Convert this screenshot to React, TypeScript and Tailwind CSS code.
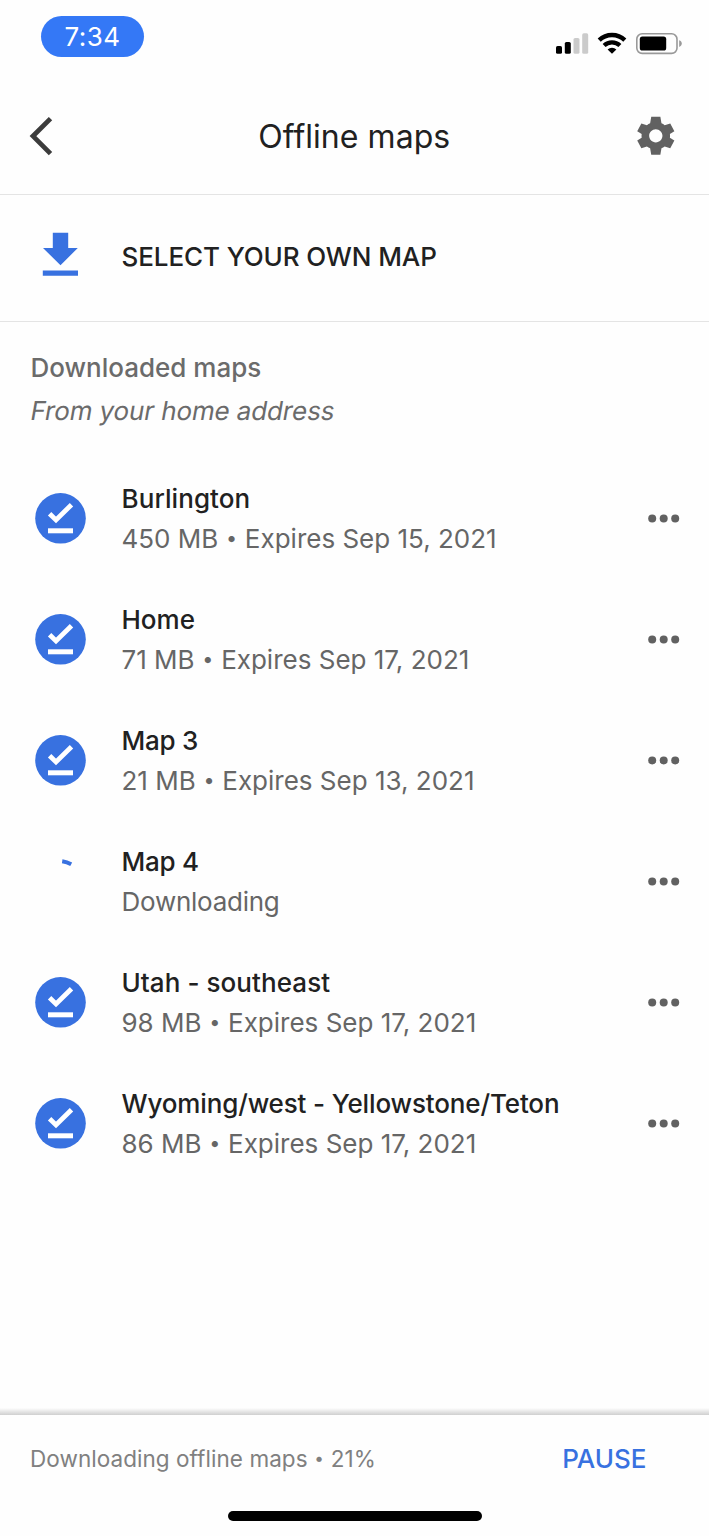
type OfflineMap = {
  name: string;
  size?: string;
  expires?: string;
  tracking: string;
};

const maps: OfflineMap[] = [
  { name: 'Burlington', size: '450 MB', expires: 'Sep 15, 2021', tracking: 'tracking-[0.08px]' },
  { name: 'Home', size: '71 MB', expires: 'Sep 17, 2021', tracking: 'tracking-normal' },
  { name: 'Map 3', size: '21 MB', expires: 'Sep 13, 2021', tracking: 'tracking-[-0.25px]' },
  { name: 'Map 4', tracking: 'tracking-[-0.25px]' },
  { name: 'Utah - southeast', size: '98 MB', expires: 'Sep 17, 2021', tracking: 'tracking-[0.07px]' },
  {
    name: 'Wyoming/west - Yellowstone/Teton',
    size: '86 MB',
    expires: 'Sep 17, 2021',
    tracking: 'tracking-[-0.14px]',
  },
];

function StatusIcons() {
  return (
    <svg className="h-6 w-[128px]" viewBox="555 32 128 24" fill="none">
      <rect x="556" y="46" width="6" height="7.8" rx="1.6" fill="#000" />
      <rect x="564.8" y="42" width="6" height="11.8" rx="1.6" fill="#000" />
      <rect x="573.5" y="38" width="6" height="15.8" rx="1.6" fill="#cbcbcb" />
      <rect x="582.2" y="33.3" width="6" height="20.5" rx="1.6" fill="#cbcbcb" />
      <path d="M599.2 40.2a18.4 18.4 0 0 1 25.6 0" stroke="#000" strokeWidth="4.4" />
      <path d="M604.1 45.6a11.4 11.4 0 0 1 15.8 0" stroke="#000" strokeWidth="4.2" />
      <path d="M612 53.8l-4.4-4.4a6.4 6.4 0 0 1 8.8 0z" fill="#000" />
      <rect x="636.8" y="33.8" width="40.2" height="19.6" rx="5.4" stroke="#999" strokeWidth="1.6" />
      <rect x="639.8" y="36.6" width="26.4" height="14" rx="2.6" fill="#000" />
      <path d="M679.2 40.2c1.7.6 2.6 1.8 2.6 3.4s-.9 2.8-2.6 3.4z" fill="#999" />
    </svg>
  );
}

function GearIcon() {
  return (
    <svg className="size-[45.6px]" viewBox="0 0 24 24" fill="#616161">
      <path d="M19.43 12.98c.04-.32.07-.64.07-.98s-.03-.66-.07-.98l2.35-1.45L19.6 5.5l-2.93.9c-.52-.4-1.08-.73-1.69-.98L14.4 2H9.6l-.58 3.42c-.61.25-1.17.58-1.69.98l-2.93-.9-2.18 4.07 2.35 1.45c-.04.32-.07.65-.07.98s.03.66.07.98l-2.35 1.45L4.4 18.5l2.93-.9c.52.4 1.08.73 1.69.98L9.6 22h4.8l.58-3.42c.61-.25 1.17-.58 1.69-.98l2.93.9 2.18-4.07zM12 15.5c-1.93 0-3.5-1.57-3.5-3.5s1.57-3.5 3.5-3.5 3.5 1.57 3.5 3.5-1.57 3.5-3.5 3.5z" />
    </svg>
  );
}

function DoneIcon() {
  return (
    <svg className="size-[52px]" viewBox="-25.5 -25.3 52 52" fill="none">
      <circle r="25.3" fill="#3871e0" />
      <path d="M-10.9-4.6l6.4 6.2L11-13.6" stroke="#fff" strokeWidth="4.8" />
      <path d="M-12.5 12.5h25" stroke="#fff" strokeWidth="5" />
    </svg>
  );
}

function SpinnerIcon() {
  return (
    <svg className="size-[52px]" viewBox="-25.5 -25.3 52 52" fill="none">
      <path d="M1.7-20A26 26 0 0 1 10.7-17" stroke="#3871e0" strokeWidth="4" />
    </svg>
  );
}

function Bullet() {
  return <span className="px-[0.02em] align-[0.14em] text-[0.76em] leading-none">•</span>;
}

function MapRow({ map }: { map: OfflineMap }) {
  return (
    <li className="flex h-[121px] items-center pr-[29px] pl-[34.5px]">
      {map.size ? <DoneIcon /> : <SpinnerIcon />}
      <div className="ml-[35px] flex-1 text-[26px] leading-[40px] whitespace-nowrap">
        <p className="font-medium text-[#212121]">
          <span className={map.tracking}>{map.name}</span>
        </p>
        {map.size ? (
          <p className="text-[#666]">
            {map.size} <Bullet /> Expires {map.expires}
          </p>
        ) : (
          <p className="tracking-[-0.25px] text-[#666]">Downloading</p>
        )}
      </div>
      <button type="button" aria-label="More">
        <svg className="h-2.5 w-8" viewBox="0 0 32 10" fill="#616161">
          <circle cx="4.2" cy="4.4" r="4" />
          <circle cx="15.7" cy="4.4" r="4" />
          <circle cx="27.2" cy="4.4" r="4" />
        </svg>
      </button>
    </li>
  );
}

export default function App() {
  return (
    <div className="flex h-[1536px] w-[709px] flex-col bg-[#fefefe] font-['Inter',sans-serif]">
      <div className="flex h-[76px] items-start justify-between pr-[26px] pl-[41px]">
        <div className="mt-4 flex h-[41px] w-[103px] items-center justify-center rounded-full bg-[#3478f6] text-[26px] tracking-[0.5px] text-white">
          <span>7:34</span>
        </div>
        <div className="mt-8">
          <StatusIcons />
        </div>
      </div>

      <header className="grid h-[119px] grid-cols-[1fr_auto_1fr] items-center border-b border-[#e4e4e4] pt-[2px] pr-[30px] pl-[29px]">
        <button type="button" aria-label="Back">
          <svg className="h-10 w-6" viewBox="0 0 24 40" fill="none">
            <path d="M21.5 2.6L4 20.1l17.5 17.5" stroke="#3c3c3c" strokeWidth="4.8" />
          </svg>
        </button>
        <h1 className="pt-[2px] pl-[0.5px] text-[32px] leading-10 tracking-[0.05px] text-[#212121]">Offline maps</h1>
        <button type="button" aria-label="Settings" className="justify-self-end">
          <GearIcon />
        </button>
      </header>

      <button type="button" className="flex h-[127px] items-center border-b border-[#e4e4e4] pb-1 pl-[42px]">
        <svg className="mb-1 h-11 w-9" viewBox="0 0 36 44" fill="#3871e0">
          <path d="M10.8.7h15.4V16h9.6L18.5 33.2 1 16h9.8zM.8 38.6h35.2v5.1H.8z" />
        </svg>
        <span className="ml-[43.5px] text-[26px] font-medium tracking-[-0.1px] text-[#212121]">
          SELECT YOUR OWN MAP
        </span>
      </button>

      <section className="h-[136px] pt-6 pl-[30.5px] text-[26px] leading-[43px] text-[#6b6b6b]">
        <h2 className="font-medium">Downloaded maps</h2>
        <p className="w-fit -skew-x-[10deg] tracking-[-0.12px]">From your home address</p>
      </section>

      <ul className="flex-1">
        {maps.map((map) => (
          <MapRow key={map.name} map={map} />
        ))}
      </ul>

      <div className="h-[7px] bg-linear-to-b from-[#fefefe] to-[#cfcfcf]" />
      <footer className="flex h-[121px] flex-col items-center">
        <div className="flex h-[87px] w-full items-center justify-between pr-[62.5px] pl-[30px]">
          <span className="text-[22.5px] tracking-[0.05px] text-[#808080]">
            Downloading offline maps <Bullet /> 21%
          </span>
          <button type="button" className="text-[26px] font-medium text-[#3871e0]">
            PAUSE
          </button>
        </div>
        <div className="mt-[9px] h-[9.5px] w-[254px] rounded-full bg-black" />
      </footer>
    </div>
  );
}
